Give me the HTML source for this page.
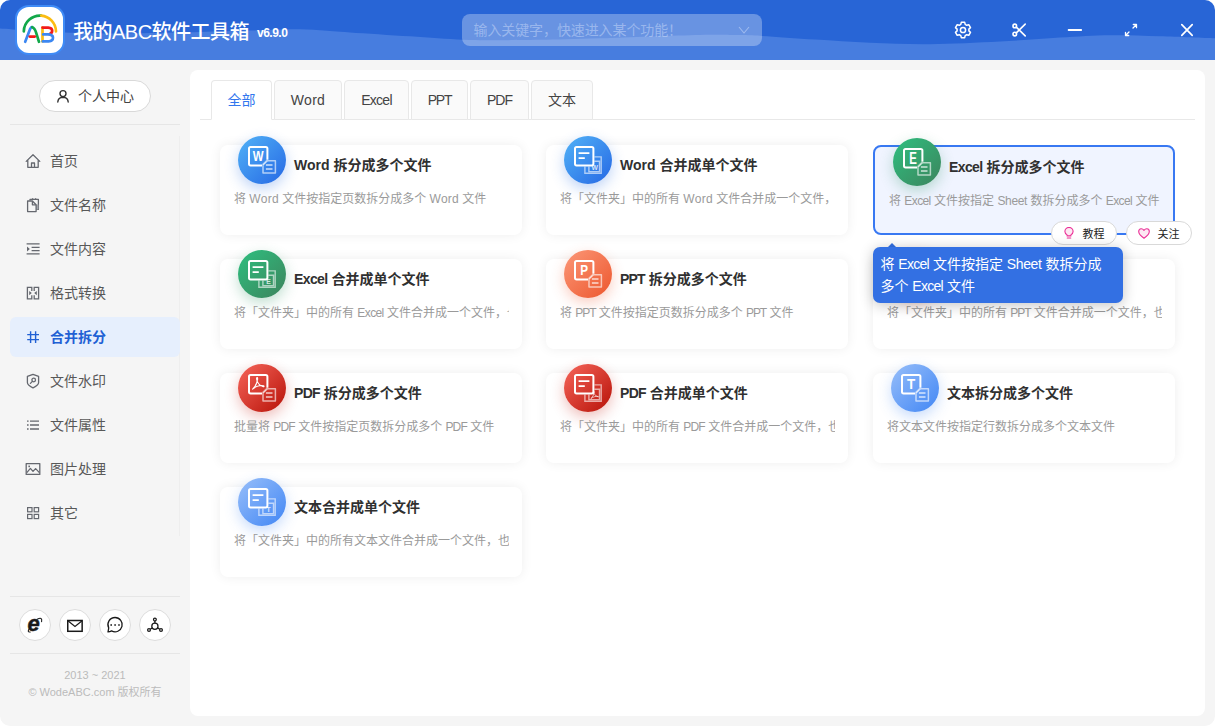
<!DOCTYPE html>
<html lang="zh-CN">
<head>
<meta charset="utf-8">
<title>我的ABC软件工具箱</title>
<style>
*{box-sizing:border-box;margin:0;padding:0}
html,body{width:1215px;height:726px;overflow:hidden;background:#fff}
body{font-family:"Liberation Sans","Noto Sans CJK SC",sans-serif;font-size:14px;color:#333;position:relative}
#win{position:absolute;left:0;top:0;width:1215px;height:726px;background:#f5f5f5;border-radius:10px;overflow:hidden}
/* header */
#hd{position:absolute;left:0;top:0;width:1215px;height:60px;background:#2865d6;overflow:hidden}
#hd svg.wave{position:absolute;left:0;top:0}
#logo{position:absolute;left:15px;top:4.6px;width:50.4px;height:50.4px;border-radius:14px;background:#fff;border:2.6px solid #3f8bf6}
#title{position:absolute;left:73px;top:16px;font-weight:500;height:32px;line-height:32px;font-size:20px;color:#fff;white-space:nowrap;letter-spacing:-0.5px}
#ver{position:absolute;left:257px;top:24.6px;font-size:12px;line-height:16px;color:#fff;font-weight:bold;letter-spacing:-0.5px}
#search{position:absolute;left:462px;top:14px;width:300px;height:32px;border-radius:8px;background:rgba(255,255,255,.3)}
#search span{position:absolute;left:11.5px;top:0;line-height:32px;font-size:14px;color:rgba(225,235,255,.42);white-space:nowrap;letter-spacing:-0.1px}
#search svg{position:absolute;left:276px;top:11px}
.hi{position:absolute;top:20px;width:20px;height:20px}
/* sidebar */
#user{position:absolute;left:39px;top:80px;width:112px;height:32px;border-radius:16px;background:#fff;border:1px solid #d9d9d9}
#user span{position:absolute;left:38px;top:0;line-height:30px;font-size:14px;color:#444}
#user svg{position:absolute;left:16px;top:8px}
.hr{position:absolute;left:10px;width:170px;height:1px;background:#e6e6e6}
#mborder{position:absolute;left:179px;top:136px;width:1px;height:400px;background:#eee}
.mi{position:absolute;left:10px;width:170px;height:40px;border-radius:6px;color:#585858;font-size:14px;line-height:40px}
.mi span{position:absolute;left:40px;top:0;white-space:nowrap}
.mi svg{position:absolute;left:15px;top:12px;width:16px;height:16px}
.mi.on{background:#e6effd;color:#2160d4;font-weight:bold}
.soc{position:absolute;top:609px;width:32px;height:32px;border-radius:16px;background:#fff;border:1px solid #ddd}
.soc svg{position:absolute;left:5px;top:5px;width:20px;height:20px}
.copy{position:absolute;left:0;width:190px;text-align:center;font-size:11px;color:#bbb;line-height:16px;white-space:nowrap}
/* main */
#main{position:absolute;left:190px;top:70px;width:1015px;height:646px;background:#fff;border-radius:8px}
#tabline{position:absolute;left:10px;top:49px;width:995px;height:1px;background:#e8e8e8}
.tab{position:absolute;top:10px;height:40px;border:1px solid #e8e8e8;border-bottom:1px solid #e8e8e8;border-radius:4px 4px 0 0;background:#fafafa;text-align:center;line-height:38px;font-size:14px;color:#444}
.tab.on{background:#fff;color:#3277ee;border-bottom-color:#fff}
.card{position:absolute;width:302px;height:90px;border-radius:8px;background:#fff;box-shadow:0 0 12px rgba(0,0,0,.07)}
.card .ic{position:absolute;left:18px;top:-9px;width:48px;height:48px;border-radius:24px}
.card .ic svg{position:absolute;left:0;top:0}
.card .tt{position:absolute;left:74px;top:9px;line-height:22px;font-size:14px;font-weight:bold;color:#303030;white-space:nowrap}
.card .ds{position:absolute;left:14px;top:44px;width:275px;overflow:hidden;white-space:nowrap;line-height:20px;font-size:12px;color:#9a9a9a}
.card.sel{border:2px solid #3878f2;background:#f0f4ff;box-shadow:none}
.card.sel .ic{left:18px;top:-9px}
.card.sel .tt{left:74px;top:9px}
.card.sel .ds{left:14px;top:44px}
.blue{background:linear-gradient(135deg,#4dabf5 10%,#2a6fe6 90%);box-shadow:0 5px 14px rgba(42,111,230,.3)}
.green{background:linear-gradient(135deg,#30b97c 10%,#3b8a60 90%);box-shadow:0 5px 14px rgba(48,150,100,.3)}
.orange{background:linear-gradient(135deg,#fa9170 10%,#ee5d35 90%);box-shadow:0 5px 14px rgba(238,93,53,.3)}
.red{background:linear-gradient(135deg,#f05d52 10%,#bd1a10 90%);box-shadow:0 5px 14px rgba(200,40,30,.3)}
.lblue{background:linear-gradient(135deg,#8fb9f9 10%,#4a8cf5 90%);box-shadow:0 5px 14px rgba(74,140,245,.3)}
.ic text{font-family:"Liberation Sans",sans-serif;font-weight:bold;fill:#fff}
.pill{position:absolute;top:221px;width:66px;height:24px;border-radius:12px;background:#fff;border:1px solid #d9d9d9;font-size:11px;line-height:22px;color:#222}
.pill span{position:absolute;left:30.5px;top:1px;white-space:nowrap}
.pill svg{position:absolute}
#tip{position:absolute;left:873px;top:247px;width:250px;height:56px;border-radius:7px;background:#3370e3;color:#fff;font-size:14px;line-height:22px;padding:6px 8px 6px 7.4px;box-shadow:0 2px 14px rgba(0,0,0,.24)}
#tiparrow{position:absolute;left:888.2px;top:243px;width:0;height:0;border-left:4.4px solid transparent;border-right:4.4px solid transparent;border-bottom:4.4px solid #3370e3}
</style>
</head>
<body>
<div id="win">
<div id="hd">
<svg class="wave" width="1215" height="60" viewBox="0 0 1215 60"><path fill="#477ddf" d="M0,28.5C5.0,28.8 19.2,29.9 30,30.5C40.8,31.1 51.7,31.9 65,32.4C78.3,32.9 95.8,33.3 110,33.4C124.2,33.5 135.0,33.2 150,33C165.0,32.8 183.3,32.4 200,32C216.7,31.6 235.0,31.1 250,30.6C265.0,30.2 278.3,29.4 290,29.3C301.7,29.2 310.0,29.7 320,30.2C330.0,30.7 335.0,31.4 350,32.4C365.0,33.4 391.2,35.1 410,36.3C428.8,37.5 448.0,39.1 463,39.8C478.0,40.4 487.2,40.2 500,40.2C512.8,40.2 523.3,40.1 540,39.8C556.7,39.5 573.3,39.0 600,38.2C626.7,37.4 676.7,35.4 700,34.9C723.3,34.4 729.7,34.9 740,35.1C750.3,35.3 749.5,35.2 762,35.9C774.5,36.6 797.0,38.4 815,39.5C833.0,40.6 850.8,42.0 870,42.8C889.2,43.6 908.3,44.4 930,44.2C951.7,44.0 978.3,42.6 1000,41.5C1021.7,40.4 1041.7,38.5 1060,37.5C1078.3,36.5 1093.3,35.4 1110,35.2C1126.7,35.0 1142.5,35.7 1160,36.2C1177.5,36.7 1205.8,37.9 1215,38.2L1215,60L0,60Z"/></svg>
<div id="logo"><svg width="45.2" height="45.2" viewBox="16.8 7.2 45.2 45.2" style="display:block" fill="none" stroke-width="2.7" stroke-linecap="round" stroke-linejoin="round">
<path d="M23.6,31.6 A16.2,16.2 0 0 1 41,15.8" stroke="#12a84a"/>
<path d="M41,15.8 A16.2,16.2 0 0 1 55.8,31.6" stroke="#fbbc12"/>
<path d="M25,42 L30,29 Q31,27.2 32,27.4" stroke="#3b87f2"/>
<path d="M32,27.4 Q34.5,28 36,33 L38.8,42" stroke="#12a84a"/>
<path d="M29.6,36.8 L34.6,36.8" stroke="#f21a1a"/>
<path d="M42.3,27.8 L42.3,41.6" stroke="#fbbc12"/>
<path d="M42.3,27.8 L48,27.8 Q52,28 52,31 Q52,33.6 49,34.4" stroke="#f21a1a"/>
<path d="M43,34.6 L48.5,34.6 Q52.8,35 52.8,38 Q52.8,41.4 48.5,41.6 L42.6,41.6" stroke="#3b87f2"/>
</svg></div>
<div id="title">我的ABC软件工具箱</div>
<div id="ver">v6.9.0</div>
<div id="search"><span>输入关键字，快速进入某个功能！</span><svg width="12" height="10" viewBox="0 0 12 10" fill="none" stroke="rgba(225,235,255,.45)" stroke-width="1.1"><path d="M1,2 L6,8 L11,2"/></svg></div>
<svg class="hi" style="left:953px" viewBox="0 0 20 20" fill="none" stroke="#fff" stroke-width="1.5" stroke-linejoin="round"><path d="M8.3,2.3 h3.4 l0.5,2.1 l1.5,0.9 l2.1,-0.6 l1.7,2.9 l-1.6,1.5 v1.8 l1.6,1.5 l-1.7,2.9 l-2.1,-0.6 l-1.5,0.9 l-0.5,2.1 h-3.4 l-0.5,-2.1 l-1.5,-0.9 l-2.1,0.6 l-1.7,-2.9 l1.6,-1.5 v-1.8 l-1.6,-1.5 l1.7,-2.9 l2.1,0.6 l1.5,-0.9 z"/><circle cx="10" cy="10" r="2.6"/></svg>
<svg class="hi" style="left:1009px" viewBox="0 0 20 20" fill="none" stroke="#fff" stroke-width="1.6" stroke-linecap="round"><circle cx="5.8" cy="5.9" r="1.8"/><circle cx="5.8" cy="14.1" r="1.8"/><path d="M7.3,7.1 L16.2,15.9 M7.3,12.9 L16.2,4.1"/></svg>
<svg class="hi" style="left:1065px" viewBox="0 0 20 20" fill="none" stroke="#fff" stroke-width="1.8" stroke-linecap="round"><path d="M3.6,10 H16.2"/></svg>
<svg class="hi" style="left:1121px" viewBox="0 0 20 20" fill="none" stroke="#fff" stroke-width="1.3" stroke-linecap="round" stroke-linejoin="round"><path d="M4.5,15.5 L8,12 M12,8 L15.5,4.5 M12.3,4.5 H15.5 V7.7 M4.5,12.3 V15.5 H7.7"/></svg>
<svg class="hi" style="left:1177px" viewBox="0 0 20 20" fill="none" stroke="#fff" stroke-width="1.7" stroke-linecap="round"><path d="M4.8,4.6 L15.2,15.4 M15.2,4.6 L4.8,15.4"/></svg>
</div>
<div id="user"><svg width="14" height="14" viewBox="0 0 14 14" fill="none" stroke="#333" stroke-width="1.4" stroke-linecap="round"><circle cx="7" cy="4.6" r="3"/><path d="M1.8,13 Q2,8.4 7,8.2 Q12,8.4 12.2,13"/></svg><span>个人中心</span></div>
<div class="hr" style="top:124px"></div>
<div id="mborder"></div>
<div class="mi" style="top:141px"><svg viewBox="0 0 16 16" fill="none" stroke="#65686f" stroke-width="1.3" stroke-linejoin="round" stroke-linecap="round"><path d="M1.2,8.4 L8,1.8 L14.8,8.4 M2.8,7.2 V14.3 H13.2 V7.2 M6.5,14.3 V10 H9.5 V14.3"/></svg><span>首页</span></div>
<div class="mi" style="top:185px"><svg viewBox="0 0 16 16" fill="none" stroke="#65686f" stroke-width="1.3" stroke-linejoin="round"><path d="M5,3.6 V2.4 H13.4 V12.4 H11.4" /><path d="M11.2,7.4 H13.4 V12.4 H11.2 Z" fill="#a5a7ac" stroke="none"/><path d="M7.6,1.2 V2.4 M10.6,1.2 V2.4"/><path d="M2.6,4 H7.4 L11.1,7.8 V14.6 H2.6 Z"/><path d="M7.4,4.2 V7.8 H11"/></svg><span>文件名称</span></div>
<div class="mi" style="top:229px"><svg viewBox="0 0 16 16" fill="none" stroke="#65686f" stroke-width="1.3"><path d="M1.6,2.9 H14.6 M6.6,6.4 H14.6 M6.6,9.7 H14.6 M1.6,12.9 H14.6"/><path d="M2,5.6 L4.8,8 L2,10.4 Z" fill="#65686f" stroke="none"/></svg><span>文件内容</span></div>
<div class="mi" style="top:273px"><svg viewBox="0 0 16 16" fill="none" stroke="#65686f" stroke-width="1.3"><path d="M6.8,6 V2.4 H2.4 V13.8 H6.8 V10.2 M9.2,6 V2.4 H13.6 V13.8 H9.2 V10.2"/><path d="M4.2,6 L6.8,8.1 L4.2,10.2 Z M11.8,6 L9.2,8.1 L11.8,10.2 Z" fill="#65686f" stroke="none"/></svg><span>格式转换</span></div>
<div class="mi on" style="top:317px"><svg viewBox="0 0 16 16" fill="none" stroke="#2160d4" stroke-width="1.4"><path d="M5.6,2.2 V14 M10.6,2.2 V14 M2.2,5.6 H14 M2.2,10.6 H14"/></svg><span>合并拆分</span></div>
<div class="mi" style="top:361px"><svg viewBox="0 0 16 16" fill="none" stroke="#65686f" stroke-width="1.3" stroke-linejoin="round"><path d="M8,1.4 L13.6,3.4 V9.4 Q13.6,12 8,14.8 Q2.4,12 2.4,9.4 V3.4 Z"/><circle cx="8.7" cy="7" r="1.8"/><path d="M7.4,8.4 L5.4,10.4" stroke-linecap="round"/></svg><span>文件水印</span></div>
<div class="mi" style="top:405px"><svg viewBox="0 0 16 16" fill="none" stroke="#65686f" stroke-width="1.3"><path d="M5,4.1 H14 M5,8 H14 M5,12 H14"/><path d="M2,4.1 H3.6 M2,8 H3.6 M2,12 H3.6"/></svg><span>文件属性</span></div>
<div class="mi" style="top:449px"><svg viewBox="0 0 16 16" fill="none" stroke="#65686f" stroke-width="1.3" stroke-linejoin="round"><rect x="1.2" y="2.6" width="13.6" height="10.8"/><path d="M1.8,11.6 L5.4,7.4 L8,10.4 L10.6,7.6 L14.4,11.6"/><rect x="3.4" y="4.6" width="1.6" height="1.6" fill="#65686f" stroke="none"/></svg><span>图片处理</span></div>
<div class="mi" style="top:493px"><svg viewBox="0 0 16 16" fill="none" stroke="#65686f" stroke-width="1.2"><rect x="2.6" y="2.6" width="4.4" height="4.2"/><rect x="9.2" y="2.6" width="4.4" height="4.2"/><rect x="2.6" y="9.4" width="4.4" height="4.2"/><rect x="9.2" y="9.4" width="4.4" height="4.2"/></svg><span>其它</span></div>
<div class="hr" style="top:596px"></div>
<div class="soc" style="left:19px"><svg viewBox="0 0 20 20"><text x="2.6" y="16.2" font-family="Liberation Sans,sans-serif" font-size="22" font-weight="bold" font-style="italic" fill="#1a1a1a" stroke="#1a1a1a" stroke-width=".5">e</text><path d="M4.6,13.2 Q1.6,17.4 5.2,17 M12.2,4.2 Q17.6,1.6 16.6,6.6" fill="none" stroke="#1a1a1a" stroke-width="1.1" stroke-linecap="round"/></svg></div>
<div class="soc" style="left:59px"><svg viewBox="0 0 20 20" fill="none" stroke="#1a1a1a"><rect x="2.75" y="5.5" width="14.4" height="10.8" stroke-width="1.5"/><path d="M3.2,6 L10,11.4 L16.8,6" stroke-width="1.2"/></svg></div>
<div class="soc" style="left:99px"><svg viewBox="0 0 20 20" fill="none" stroke="#1a1a1a" stroke-width="1.3"><path d="M10.1,2.5 A7.15,7.15 0 1 1 6.6,15.9 Q4.8,16.9 3,16.9 Q3.4,15.4 3.7,12.9 A7.15,7.15 0 0 1 10.1,2.5 Z" stroke-linejoin="round"/><path d="M5.4,10 H7 M9.3,10 H10.9 M13.2,10 H14.8" stroke-width="1.6"/></svg></div>
<div class="soc" style="left:139px"><svg viewBox="0 0 20 20" fill="none" stroke="#1a1a1a" stroke-width="1.25"><circle cx="9.9" cy="11.3" r="3.1"/><circle cx="9.9" cy="4.6" r="1.4"/><circle cx="4" cy="15" r="1.4"/><circle cx="16" cy="15" r="1.4"/><path d="M9.9,6 V8.2 M7.2,12.9 L5.2,14.2 M12.6,12.9 L14.8,14.2"/></svg></div>
<div class="hr" style="top:653px"></div>
<div class="copy" style="top:667px">2013 ~ 2021</div>
<div class="copy" style="top:684px">© WodeABC.com 版权所有</div>
<!--MAIN-START--><svg width="0" height="0" style="position:absolute"><defs><mask id="mk" maskUnits="userSpaceOnUse" x="0" y="0" width="48" height="48"><rect width="48" height="48" fill="#fff"/><path d="M28.2,23.8 H38.4 V38 H24 V28 Z" fill="#000"/></mask></defs></svg>
<div id="main">
<div id="tabline"></div>
<div class="tab on" style="left:21px;width:61px">全部</div>
<div class="tab" style="left:84px;width:68px"><span style="letter-spacing:0.3px">Word</span></div>
<div class="tab" style="left:154px;width:65px"><span style="letter-spacing:-0.7px">Excel</span></div>
<div class="tab" style="left:221px;width:57px"><span style="letter-spacing:-1.3px">PPT</span></div>
<div class="tab" style="left:280px;width:59px"><span style="letter-spacing:-1.0px">PDF</span></div>
<div class="tab" style="left:341px;width:62px">文本</div>
<div class="card" style="left:30px;top:75px"><div class="ic blue"><svg width="48" height="48" viewBox="0 0 48 48"><rect x="11" y="11" width="18.4" height="18.4" rx="1.6" fill="none" stroke="#fff" stroke-width="2" mask="url(#mk)"/><text x="14.70" y="24.9" font-size="13.8" textLength="10.8" lengthAdjust="spacingAndGlyphs">W</text><path d="M25.5,28.9 L29.1,25.3" stroke="#fff" stroke-width="1" opacity=".95"/><path d="M28.6,24.8 H37.4 V37 H25 V28.4 Z" fill="none" stroke="#fff" stroke-opacity=".62" stroke-width="1.5" stroke-linejoin="round"/><path d="M27.9,29 H34.5 M27.9,33 H34.5" stroke="#fff" stroke-opacity=".75" stroke-width="1.5"/></svg></div><div class="tt">Word 拆分成多个文件</div><div class="ds">将 <span style="letter-spacing:0.26px">Word</span> 文件按指定页数拆分成多个 <span style="letter-spacing:0.26px">Word</span> 文件</div></div>
<div class="card" style="left:356px;top:75px"><div class="ic blue"><svg width="48" height="48" viewBox="0 0 48 48"><path d="M30.4,20.9 H37.2 V37.2 H20.9 V30.4 M30.4,25.3 H35.5 V35.6 H24.9 V30.4" fill="none" stroke="#fff" stroke-opacity=".6" stroke-width="1.4"/><text x="30.6" y="34.2" font-size="6.8" text-anchor="middle" fill-opacity=".8">W</text><rect x="11" y="11" width="18.4" height="18.4" rx="1.6" fill="none" stroke="#fff" stroke-width="2"/><path d="M14.6,17.2 H25.4 M14.6,22.1 H20.8" stroke="#fff" stroke-width="1.7"/></svg></div><div class="tt">Word 合并成单个文件</div><div class="ds">将「文件夹」中的所有 <span style="letter-spacing:0.26px">Word</span> 文件合并成一个文件，也可以按文件夹合并</div></div>
<div class="card sel" style="left:683px;top:75px"><div class="ic green"><svg width="48" height="48" viewBox="0 0 48 48"><rect x="11" y="11" width="18.4" height="18.4" rx="1.6" fill="none" stroke="#fff" stroke-width="2" mask="url(#mk)"/><text x="16.30" y="25.7" font-size="16.4" textLength="7.6" lengthAdjust="spacingAndGlyphs">E</text><path d="M25.5,28.9 L29.1,25.3" stroke="#fff" stroke-width="1" opacity=".95"/><path d="M28.6,24.8 H37.4 V37 H25 V28.4 Z" fill="none" stroke="#fff" stroke-opacity=".62" stroke-width="1.5" stroke-linejoin="round"/><path d="M27.9,29 H34.5 M27.9,33 H34.5" stroke="#fff" stroke-opacity=".75" stroke-width="1.5"/></svg></div><div class="tt"><span style="letter-spacing:-0.62px">Excel</span> 拆分成多个文件</div><div class="ds">将 <span style="letter-spacing:-0.6px">Excel</span> 文件按指定 <span style="letter-spacing:-0.32px">Sheet</span> 数拆分成多个 <span style="letter-spacing:-0.6px">Excel</span> 文件</div></div>
<div class="card" style="left:30px;top:189px"><div class="ic green"><svg width="48" height="48" viewBox="0 0 48 48"><path d="M30.4,20.9 H37.2 V37.2 H20.9 V30.4 M30.4,25.3 H35.5 V35.6 H24.9 V30.4" fill="none" stroke="#fff" stroke-opacity=".6" stroke-width="1.4"/><text x="30.6" y="34.2" font-size="6.8" text-anchor="middle" fill-opacity=".8">E</text><rect x="11" y="11" width="18.4" height="18.4" rx="1.6" fill="none" stroke="#fff" stroke-width="2"/><path d="M14.6,17.2 H25.4 M14.6,22.1 H20.8" stroke="#fff" stroke-width="1.7"/></svg></div><div class="tt"><span style="letter-spacing:-0.62px">Excel</span> 合并成单个文件</div><div class="ds">将「文件夹」中的所有 <span style="letter-spacing:-0.6px">Excel</span> 文件合并成一个文件，也可以按文件夹合并</div></div>
<div class="card" style="left:356px;top:189px"><div class="ic orange"><svg width="48" height="48" viewBox="0 0 48 48"><rect x="11" y="11" width="18.4" height="18.4" rx="1.6" fill="none" stroke="#fff" stroke-width="2" mask="url(#mk)"/><text x="16.20" y="25.2" font-size="14.6" textLength="7.8" lengthAdjust="spacingAndGlyphs">P</text><path d="M25.5,28.9 L29.1,25.3" stroke="#fff" stroke-width="1" opacity=".95"/><path d="M28.6,24.8 H37.4 V37 H25 V28.4 Z" fill="none" stroke="#fff" stroke-opacity=".62" stroke-width="1.5" stroke-linejoin="round"/><path d="M27.9,29 H34.5 M27.9,33 H34.5" stroke="#fff" stroke-opacity=".75" stroke-width="1.5"/></svg></div><div class="tt"><span style="letter-spacing:-0.8px">PPT</span> 拆分成多个文件</div><div class="ds">将 <span style="letter-spacing:-1.1px">PPT</span> 文件按指定页数拆分成多个 <span style="letter-spacing:-1.1px">PPT</span> 文件</div></div>
<div class="card" style="left:683px;top:189px"><div class="ic orange"><svg width="48" height="48" viewBox="0 0 48 48"><path d="M30.4,20.9 H37.2 V37.2 H20.9 V30.4 M30.4,25.3 H35.5 V35.6 H24.9 V30.4" fill="none" stroke="#fff" stroke-opacity=".6" stroke-width="1.4"/><text x="30.6" y="34.2" font-size="6.8" text-anchor="middle" fill-opacity=".8">P</text><rect x="11" y="11" width="18.4" height="18.4" rx="1.6" fill="none" stroke="#fff" stroke-width="2"/><path d="M14.6,17.2 H25.4 M14.6,22.1 H20.8" stroke="#fff" stroke-width="1.7"/></svg></div><div class="tt"><span style="letter-spacing:-0.8px">PPT</span> 合并成单个文件</div><div class="ds">将「文件夹」中的所有 <span style="letter-spacing:-1.1px">PPT</span> 文件合并成一个文件，也可以按文件夹合并</div></div>
<div class="card" style="left:30px;top:303px"><div class="ic red"><svg width="48" height="48" viewBox="0 0 48 48"><rect x="11" y="11" width="18.4" height="18.4" rx="1.6" fill="none" stroke="#fff" stroke-width="2" mask="url(#mk)"/><path d="M14.6,25.2 Q18.6,21.6 19.6,15.4 Q19.8,13.2 18.9,13.6 Q18,14.4 19.4,17.6 Q21.2,21.6 25.2,22.6 Q26.6,22.6 25.6,21.8 Q23,21 19.4,22.2 Q16.6,23.2 14.6,25.2 Z" fill="none" stroke="#fff" stroke-width="1.1" stroke-linejoin="round"/><path d="M25.5,28.9 L29.1,25.3" stroke="#fff" stroke-width="1" opacity=".95"/><path d="M28.6,24.8 H37.4 V37 H25 V28.4 Z" fill="none" stroke="#fff" stroke-opacity=".62" stroke-width="1.5" stroke-linejoin="round"/><path d="M27.9,29 H34.5 M27.9,33 H34.5" stroke="#fff" stroke-opacity=".75" stroke-width="1.5"/></svg></div><div class="tt"><span style="letter-spacing:-0.7px">PDF</span> 拆分成多个文件</div><div class="ds">批量将 <span style="letter-spacing:-0.85px">PDF</span> 文件按指定页数拆分成多个 <span style="letter-spacing:-0.85px">PDF</span> 文件</div></div>
<div class="card" style="left:356px;top:303px"><div class="ic red"><svg width="48" height="48" viewBox="0 0 48 48"><path d="M30.4,20.9 H37.2 V37.2 H20.9 V30.4 M30.4,25.3 H35.5 V35.6 H24.9 V30.4" fill="none" stroke="#fff" stroke-opacity=".6" stroke-width="1.4"/><path d="M27,34.6 Q29.6,32 30.2,28.4 Q30.2,27 29.7,27.4 Q29.4,28 30.2,29.8 Q31.4,32.2 34.4,33 Q35,32.8 34.2,32.4 Q32.4,32 30.2,32.8 Q28.4,33.4 27,34.6 Z" fill="none" stroke="#fff" stroke-opacity=".7" stroke-width="0.9"/><rect x="11" y="11" width="18.4" height="18.4" rx="1.6" fill="none" stroke="#fff" stroke-width="2"/><path d="M14.6,17.2 H25.4 M14.6,22.1 H20.8" stroke="#fff" stroke-width="1.7"/></svg></div><div class="tt"><span style="letter-spacing:-0.7px">PDF</span> 合并成单个文件</div><div class="ds">将「文件夹」中的所有 <span style="letter-spacing:-0.85px">PDF</span> 文件合并成一个文件，也可以按文件夹合并</div></div>
<div class="card" style="left:683px;top:303px"><div class="ic lblue"><svg width="48" height="48" viewBox="0 0 48 48"><rect x="11" y="11" width="18.4" height="18.4" rx="1.6" fill="none" stroke="#fff" stroke-width="2" mask="url(#mk)"/><text x="16.00" y="25" font-size="14.2" textLength="8.2" lengthAdjust="spacingAndGlyphs">T</text><path d="M25.5,28.9 L29.1,25.3" stroke="#fff" stroke-width="1" opacity=".95"/><path d="M28.6,24.8 H37.4 V37 H25 V28.4 Z" fill="none" stroke="#fff" stroke-opacity=".62" stroke-width="1.5" stroke-linejoin="round"/><path d="M27.9,29 H34.5 M27.9,33 H34.5" stroke="#fff" stroke-opacity=".75" stroke-width="1.5"/></svg></div><div class="tt">文本拆分成多个文件</div><div class="ds">将文本文件按指定行数拆分成多个文本文件</div></div>
<div class="card" style="left:30px;top:417px"><div class="ic lblue"><svg width="48" height="48" viewBox="0 0 48 48"><path d="M30.4,20.9 H37.2 V37.2 H20.9 V30.4 M30.4,25.3 H35.5 V35.6 H24.9 V30.4" fill="none" stroke="#fff" stroke-opacity=".6" stroke-width="1.4"/><text x="30.6" y="34.2" font-size="6.8" text-anchor="middle" fill-opacity=".8">T</text><rect x="11" y="11" width="18.4" height="18.4" rx="1.6" fill="none" stroke="#fff" stroke-width="2"/><path d="M14.6,17.2 H25.4 M14.6,22.1 H20.8" stroke="#fff" stroke-width="1.7"/></svg></div><div class="tt">文本合并成单个文件</div><div class="ds">将「文件夹」中的所有文本文件合并成一个文件，也可以按文件夹合并</div></div>
</div>
<div class="pill" style="left:1051px"><svg style="left:12.4px;top:5.4px" width="10" height="12" viewBox="0 0 10 12" fill="#fde8f3" stroke="#eb2f96" stroke-width="1.1" stroke-linecap="round" stroke-linejoin="round"><path d="M3.1,8.9 V7.9 Q0.9,6.6 0.9,4.5 A4.1,4.1 0 0 1 9.1,4.5 Q9.1,6.6 6.9,7.9 V8.9 Z"/><path d="M3.3,11 H6.7" stroke-width="1.2"/></svg><span>教程</span></div>
<div class="pill" style="left:1126px"><svg style="left:11.4px;top:6px" width="12" height="11" viewBox="0 0 12 11" fill="#fde8f3" stroke="#eb2f96" stroke-width="1.1" stroke-linejoin="round"><path d="M6,10.2 Q0.7,6.6 0.7,3.6 Q0.7,0.8 3.2,0.8 Q4.9,0.8 6,2.4 Q7.1,0.8 8.8,0.8 Q11.3,0.8 11.3,3.6 Q11.3,6.6 6,10.2 Z"/></svg><span>关注</span></div>
<div id="tiparrow"></div>
<div id="tip">将 <span style="letter-spacing:-0.7px">Excel</span> 文件按指定 <span style="letter-spacing:-0.37px">Sheet</span> 数拆分成多个 <span style="letter-spacing:-0.7px">Excel</span> 文件</div><!--MAIN-END-->
</div>
</body>
</html>
